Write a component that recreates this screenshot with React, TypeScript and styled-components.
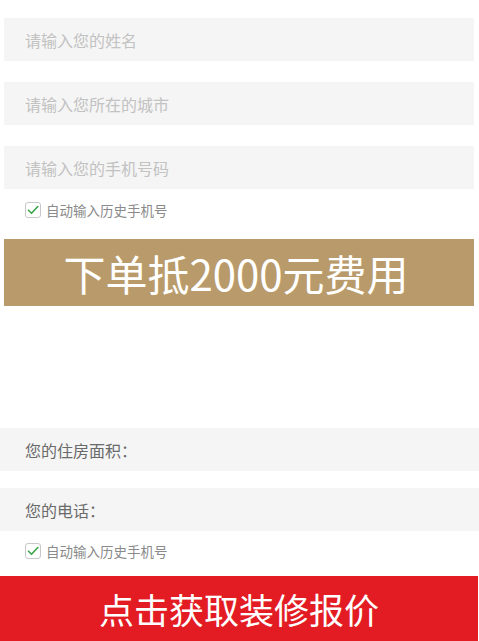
import React from "react";
import styled, { createGlobalStyle } from "styled-components";

const Global = createGlobalStyle`
  html, body { margin: 0; padding: 0; background: #fff; }
  body { font-family: "Noto Sans CJK SC", "Noto Sans", sans-serif; }
  * { box-sizing: border-box; }
`;

const Page = styled.div`
  width: 479px;
  display: flex;
  flex-direction: column;
`;

const Section = styled.section<{ $inset: boolean; $top: number }>`
  display: flex;
  flex-direction: column;
  padding: ${(p) => `${p.$top}px ${p.$inset ? "5px" : "0"} 0 ${p.$inset ? "4px" : "0"}`};
`;

const Fields = styled.div<{ $gap: number }>`
  display: flex;
  flex-direction: column;
  gap: ${(p) => p.$gap}px;
`;

const Field = styled.div<{ $label?: boolean }>`
  height: 43px;
  background: #f5f5f5;
  display: flex;
  align-items: center;
  padding-left: ${(p) => (p.$label ? "25px" : "21px")};
  font-size: 16px;
  color: ${(p) => (p.$label ? "#6a6a6a" : "#c2c2c2")};
`;

const CheckRow = styled.label<{ $top: number; $bottom: number; $left: number }>`
  display: flex;
  align-items: center;
  gap: 5px;
  margin: ${(p) => `${p.$top}px 0 ${p.$bottom}px ${p.$left}px`};
  font-size: 13.5px;
  color: #8a8a8a;
  line-height: 16px;
`;

const Box = styled.span`
  width: 16px;
  height: 16px;
  border: 1px solid #c8c8c8;
  border-radius: 3px;
  display: flex;
  align-items: center;
  justify-content: center;
  background: #fff;
`;

const Banner = styled.div`
  height: 67px;
  background: #b99b6b;
  color: #fff;
  display: flex;
  align-items: center;
  justify-content: center;
  font-size: 42px;
  padding-right: 6px;
`;

const Spacer = styled.div`
  height: 122px;
`;

const SubmitButton = styled.button`
  height: 66px;
  width: 478px;
  border: none;
  background: #e31c24;
  color: #fff;
  font-family: inherit;
  font-size: 35px;
  display: flex;
  align-items: center;
  justify-content: center;
  padding: 0 0 2px 0;
`;

const Check = () => (
  <Box>
    <svg width="12" height="10" viewBox="0 0 12 10">
      <path d="M1.5 5.2 L4.5 8.2 L10.8 1.5" fill="none" stroke="#3aa548" strokeWidth="1.6" strokeLinecap="round" strokeLinejoin="round" />
    </svg>
  </Box>
);

export default function App() {
  return (
    <Page>
      <Global />
      <Section $inset $top={18}>
        <Fields $gap={21}>
          <Field>请输入您的姓名</Field>
          <Field>请输入您所在的城市</Field>
          <Field>请输入您的手机号码</Field>
        </Fields>
        <CheckRow $top={13} $bottom={21} $left={21}>
          <Check />
          自动输入历史手机号
        </CheckRow>
        <Banner>下单抵2000元费用</Banner>
      </Section>
      <Spacer />
      <Section $inset={false} $top={0}>
        <Fields $gap={17}>
          <Field $label>您的住房面积：</Field>
          <Field $label>您的电话：</Field>
        </Fields>
        <CheckRow $top={12} $bottom={17} $left={25}>
          <Check />
          自动输入历史手机号
        </CheckRow>
        <SubmitButton>点击获取装修报价</SubmitButton>
      </Section>
    </Page>
  );
}
